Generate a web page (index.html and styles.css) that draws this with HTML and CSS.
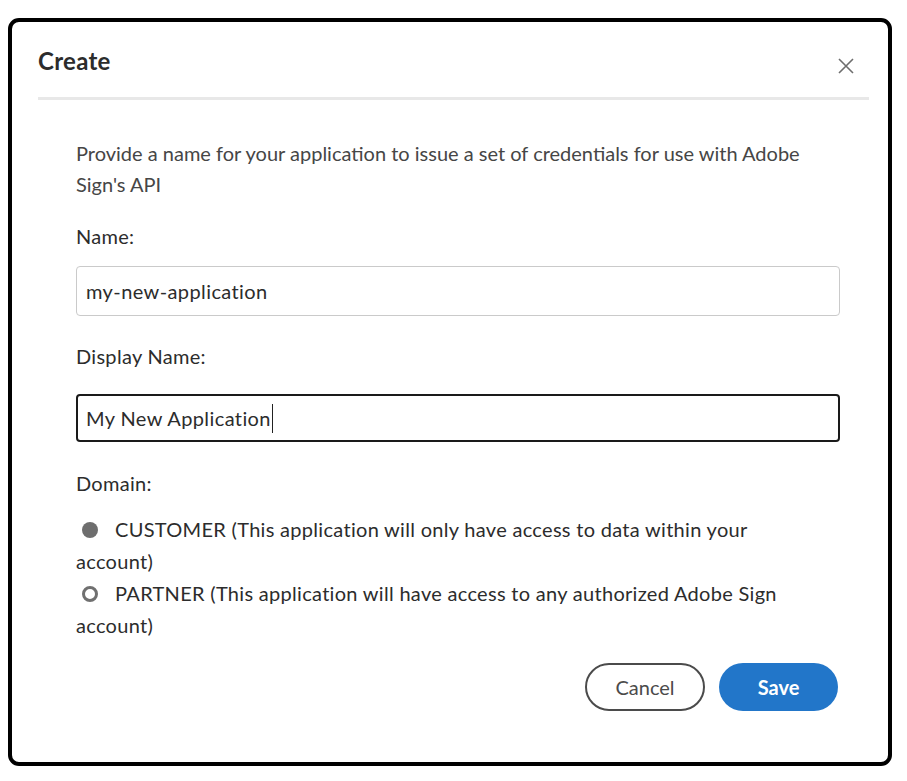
FILE: index.html
```html
<!DOCTYPE html>
<html lang="en">
<head>
<meta charset="utf-8">
<title>Create</title>
<link rel="stylesheet" href="styles.css">
</head>
<body>
<div class="dialog">
  <div class="header">
    <h1 class="title">Create</h1>
    <button class="close" aria-label="Close">
      <svg width="16" height="16" viewBox="0 0 16 16"><path d="M1 1 L15 15 M15 1 L1 15" stroke="#6e6e6e" stroke-width="1.6" fill="none"/></svg>
    </button>
  </div>
  <div class="divider"></div>
  <div class="content">
    <p class="desc">Provide a name for your application to issue a set of credentials for use with Adobe Sign's API</p>
    <div class="label label-name">Name:</div>
    <div class="field field-plain">my-new-application</div>
    <div class="label label-display">Display Name:</div>
    <div class="field field-focus">My New Application<span class="caret"></span></div>
    <div class="label label-domain">Domain:</div>
    <div class="radios">
      <div class="radio-row"><span class="radio radio-on"></span>CUSTOMER (This application will only have access to data within your account)</div>
      <div class="radio-row"><span class="radio radio-off"></span>PARTNER (This application will have access to any authorized Adobe Sign account)</div>
    </div>
    <div class="actions">
      <button class="btn btn-cancel">Cancel</button>
      <button class="btn btn-save">Save</button>
    </div>
  </div>
</div>
</body>
</html>
```
FILE: styles.css
```css
html, body {
  margin: 0;
  padding: 0;
  background: #ffffff;
}
body {
  padding: 18px 15px 15px 8px;
  font-family: Lato, "Open Sans", sans-serif;
  color: #2c2c2c;
}
.dialog {
  width: 884px;
  height: 748px;
  box-sizing: border-box;
  border: 4px solid #000;
  border-radius: 11px;
  background: #fff;
}
.header {
  display: flex;
  justify-content: space-between;
  align-items: flex-start;
  padding: 23px 34px 0 26px;
}
.title {
  margin: 0;
  font-size: 24px;
  line-height: 32px;
  font-weight: 700;
  letter-spacing: 0.3px;
  color: #2c2c2c;
}
.close {
  border: 0;
  background: none;
  padding: 0;
  margin-top: 13px;
  width: 16px;
  height: 16px;
  display: block;
}
.close svg { display: block; }
.divider {
  height: 3px;
  background: #e8e8e8;
  margin: 20px 19px 0 26px;
}
.content {
  padding: 0 48px 0 64px;
  font-size: 20px;
}
.desc {
  margin: 38px 0 0;
  line-height: 31px;
  color: #464646;
}
.label {
  line-height: 32px;
  letter-spacing: 0.3px;
  color: #2c2c2c;
}
.label-name { margin-top: 20px; }
.label-display { margin-top: 24px; }
.label-domain { margin-top: 25px; }
.field {
  box-sizing: border-box;
  border-radius: 4px;
  padding: 0 9px;
  display: flex;
  align-items: center;
  letter-spacing: 0.4px;
  color: #2c2c2c;
}
.field-plain {
  margin-top: 14px;
  height: 50px;
  border: 1px solid #cacaca;
  padding-left: 9px;
}
.field-focus {
  margin-top: 22px;
  height: 48px;
  border: 2px solid #1a1a1a;
  padding-left: 8px;
}
.caret {
  display: inline-block;
  width: 1.5px;
  height: 29px;
  background: #222;
  margin-left: 1px;
}
.radios {
  margin-top: 14px;
  margin-right: 24px;
  line-height: 32px;
  letter-spacing: 0.3px;
  color: #2c2c2c;
}
.radio {
  display: inline-block;
  box-sizing: border-box;
  width: 16px;
  height: 16px;
  border-radius: 50%;
  margin: 0 17px 0 6px;
  vertical-align: -1px;
}
.radio-on { background: #6e6e6e; }
.radio-off { border: 3px solid #707070; }
.actions {
  margin-top: 22px;
  display: flex;
  justify-content: flex-end;
  gap: 14px;
  padding-right: 2px;
}
.btn {
  height: 48px;
  border-radius: 24px;
  font-family: Lato, "Open Sans", sans-serif;
  font-size: 20px;
  box-sizing: border-box;
  padding: 0;
  cursor: pointer;
}
.btn-cancel {
  width: 120px;
  background: #fff;
  border: 2px solid #4b4b4b;
  color: #4b4b4b;
}
.btn-save {
  width: 119px;
  background: #2276c9;
  border: 0;
  color: #fff;
  font-weight: 700;
}
```
